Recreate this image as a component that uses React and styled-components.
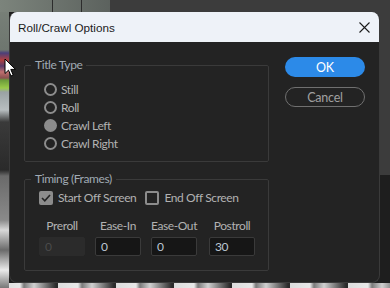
import React from 'react';
import styled, { createGlobalStyle } from "styled-components";

const GlobalStyle = createGlobalStyle`
	html, body {
		margin: 0;
		padding: 0;
		width: 390px;
		height: 288px;
		overflow: hidden;
		background: #2a2a2a;
	}
`

// the app window behind the modal, painted roughly
const Backdrop = styled.div`
	position: relative;
	width: 390px;
	height: 288px;
	box-sizing: border-box;
	padding: 12px 10px 5px 9px;
	display: flex;
	background:
		linear-gradient(90deg, transparent 52px, #2c2c2c 52px, #2c2c2c 53px, transparent 53px, transparent 81px, #2c2c2c 81px, #2c2c2c 82px, transparent 82px) 0 0 / 110px 12px no-repeat,
		linear-gradient(90deg, #7c847c, #5c625e) 0 0 / 110px 12px no-repeat,
		linear-gradient(#3c3c3c, #3c3c3c) 110px 0 / 280px 175px no-repeat,
		linear-gradient(180deg,
			#7a827a 0, #6e766f 50px,
			#4a3f7a 53px, #b04040 60px, #5a3a6a 66px,
			#c07070 72px, #8a5050 78px,
			#6a9a3a 80px, #9acb4a 88px,
			#9aa2a4 92px, #b8bec0 110px,
			#3a3a3a 122px, #2a2a2a 170px,
			#6a6a6a 176px, #8a8a8a 220px, #d8d8d8 230px, #6a6a6a 250px, #eaeaea 270px, #777 288px) 0 0 / 9px 288px no-repeat,
		repeating-linear-gradient(90deg, #dcdcdc 0, #e8e8e8 20px, #7a7a7a 24px, #d0d0d0 34px, #2a2a2a 56px, #2a2a2a 58px) 0 283px / 390px 5px no-repeat,
		linear-gradient(#1e1e1e, #1e1e1e);
`

const Cursor = styled.svg`
	position: absolute;
	left: 4px;
	top: 58px;
	width: 13px;
	height: 19px;
`

const Dialog = styled.div`
	flex: 1;
	display: flex;
	flex-direction: column;
	background: #232323;
	border: 1px solid #3a3a3a;
	border-top: none;
	border-radius: 8px;
	overflow: hidden;
	font-family: Lato, "Noto Sans", sans-serif;
	font-size: 12px;
	letter-spacing: -0.4px;
	color: #b2b2b2;
`

const TitleBar = styled.div`
	height: 30px;
	flex: 0 0 30px;
	display: flex;
	align-items: center;
	justify-content: space-between;
	padding: 0 9px 0 8px;
	background: #eef2f8;
	color: #1b1b1b;
	font-family: "Liberation Sans", Arial, sans-serif;
	font-size: 11.7px;
	letter-spacing: 0;
`

const CloseButton = styled.svg`
	width: 11px;
	height: 11px;
`

const Body = styled.div`
	display: flex;
	padding: 16px 14px 14px 14px;
	gap: 16px;
`

const Groups = styled.div`
	display: flex;
	flex-direction: column;
	gap: 10px;
	width: 245px;
`

const Group = styled.fieldset`
	margin: 0;
	box-sizing: border-box;
	height: ${p => p.$height}px;
	border: 1px solid #3a3a3a;
	border-radius: 2px;
	padding: 0;
	min-width: 0;
`

const Legend = styled.legend`
	margin-left: 6px;
	padding: 0 4px;
	color: #a0aab4;
	line-height: 14px;
`

const RadioList = styled.div`
	display: flex;
	flex-direction: column;
	gap: 5px;
	padding: 11px 0 0 19px;
`

const RadioRow = styled.label`
	display: flex;
	align-items: center;
	gap: 4px;
	height: 13px;
`

const RadioDot = styled.span`
	box-sizing: border-box;
	width: 13px;
	height: 13px;
	border-radius: 50%;
	border: 2px solid #8c8c8c;
	background: ${p => p.$checked ? "#8c8c8c" : "transparent"};
`

const CheckRow = styled.div`
	display: flex;
	align-items: center;
	gap: 9px;
	padding: 4px 0 0 14px;
`

const Check = styled.label`
	display: flex;
	align-items: center;
	gap: 5px;
	white-space: nowrap;
`

const CheckBox = styled.span`
	box-sizing: border-box;
	width: 14px;
	height: 14px;
	border-radius: 2px;
	border: 2px solid #8c8c8c;
	background: ${p => p.$checked ? "#8c8c8c" : "transparent"};
	display: flex;
	align-items: center;
	justify-content: center;
`

const Fields = styled.div`
	display: grid;
	grid-template-columns: 56px 56px 58px 46px;
	padding: 14px 0 0 14px;
`

const Field = styled.div`
	display: flex;
	flex-direction: column;
	align-items: center;
	width: 46px;
	gap: 4px;
`

const FieldLabel = styled.span`
	line-height: 14px;
	white-space: nowrap;
`

const NumberInput = styled.div`
	box-sizing: border-box;
	width: 100%;
	height: 19px;
	padding: 0 5px;
	display: flex;
	align-items: center;
	border-radius: 2px;
	border: 1px solid ${p => p.$disabled ? "#2b2b2b" : "#3a3a3a"};
	background: ${p => p.$disabled ? "#2b2b2b" : "#161616"};
	color: ${p => p.$disabled ? "#4a4a4a" : "#bcc6d2"};
`

const Buttons = styled.div`
	display: flex;
	flex-direction: column;
	gap: 10px;
	margin-top: -1px;
`

const Button = styled.button`
	box-sizing: border-box;
	width: 80px;
	height: 20px;
	padding: 0;
	border-radius: 10px;
	font-family: Lato, "Noto Sans", sans-serif;
	font-size: 12.5px;
	letter-spacing: -0.2px;
	border: ${p => p.$primary ? "none" : "1.5px solid #707070"};
	background: ${p => p.$primary ? "#2c8ae8" : "transparent"};
	color: ${p => p.$primary ? "#ffffff" : "#a0a0a0"};
`

const titleTypes = [
	{ label: "Still", checked: false },
	{ label: "Roll", checked: false },
	{ label: "Crawl Left", checked: true },
	{ label: "Crawl Right", checked: false },
]

const timings = [
	{ label: "Preroll", value: "0", disabled: true },
	{ label: "Ease-In", value: "0" },
	{ label: "Ease-Out", value: "0" },
	{ label: "Postroll", value: "30" },
]

const App = () => {
	return (
		<Backdrop>
			<GlobalStyle/>
			<Dialog>
				<TitleBar>
					<span>Roll/Crawl Options</span>
					<CloseButton viewBox="0 0 11 11">
						<path d="M0.5 0.5 L10.5 10.5 M10.5 0.5 L0.5 10.5" stroke="#1b1b1b" strokeWidth="1.1" fill="none"/>
					</CloseButton>
				</TitleBar>
				<Body>
					<Groups>
						<Group $height={104}>
							<Legend>Title Type</Legend>
							<RadioList>
								{titleTypes.map(t => (
									<RadioRow key={t.label}>
										<RadioDot $checked={t.checked}/>
										{t.label}
									</RadioRow>
								))}
							</RadioList>
						</Group>
						<Group $height={99}>
							<Legend>Timing (Frames)</Legend>
							<CheckRow>
								<Check>
									<CheckBox $checked>
										<svg width="10" height="8" viewBox="0 0 10 8">
											<path d="M1 4 L3.8 6.8 L9 1" stroke="#232323" strokeWidth="1.6" fill="none"/>
										</svg>
									</CheckBox>
									Start Off Screen
								</Check>
								<Check>
									<CheckBox/>
									End Off Screen
								</Check>
							</CheckRow>
							<Fields>
								{timings.map(f => (
									<Field key={f.label}>
										<FieldLabel>{f.label}</FieldLabel>
										<NumberInput $disabled={f.disabled}>{f.value}</NumberInput>
									</Field>
								))}
							</Fields>
						</Group>
					</Groups>
					<Buttons>
						<Button $primary>OK</Button>
						<Button>Cancel</Button>
					</Buttons>
				</Body>
			</Dialog>
			<Cursor viewBox="0 0 13 19">
				<path d="M1 1 L1 15.5 L4.5 12.2 L7 18 L9.2 17 L6.8 11.4 L11.5 11.4 Z" fill="#ffffff" stroke="#000000" strokeWidth="1" strokeLinejoin="round"/>
			</Cursor>
		</Backdrop>
	);
};

export default App;
